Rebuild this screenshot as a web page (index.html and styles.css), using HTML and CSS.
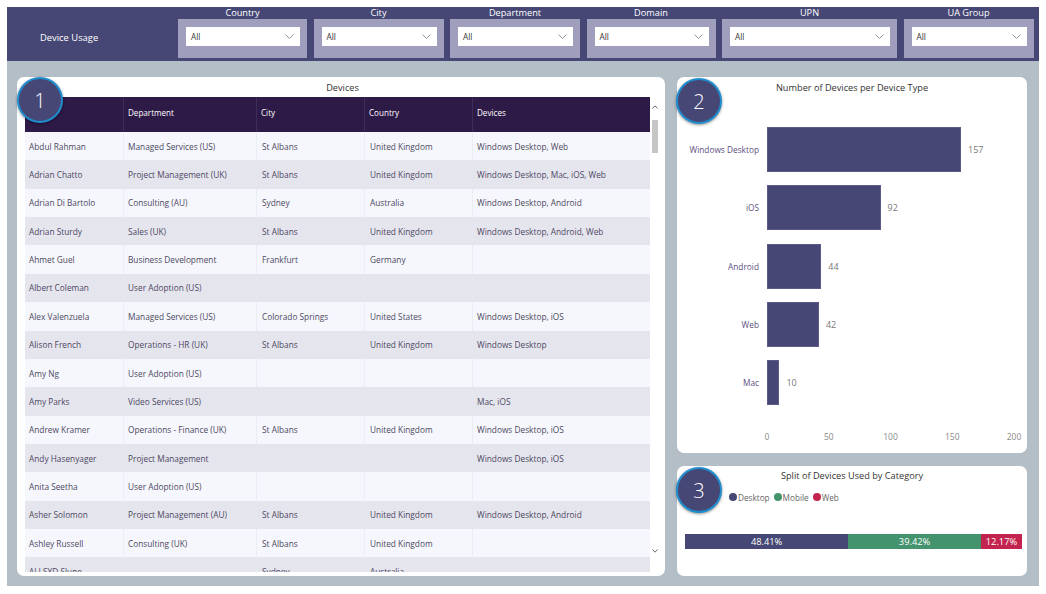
FILE: index.html
```html
<!DOCTYPE html>
<html lang="en">
<head>
<meta charset="utf-8">
<title>Device Usage</title>
<link rel="stylesheet" href="styles.css">
</head>
<body>
<div class="frame">
  <header class="topbar">
    <div class="brand">Device Usage</div>
    <div class="slicers">
      <div class="slicer w129"><div class="slicer-label">Country</div><div class="slicer-box"><div class="dropdown"><span>All</span><svg class="chev" viewBox="0 0 9 5"><polyline points="0.5,0.5 4.5,4.5 8.5,0.5"/></svg></div></div></div>
      <div class="slicer w130"><div class="slicer-label">City</div><div class="slicer-box"><div class="dropdown"><span>All</span><svg class="chev" viewBox="0 0 9 5"><polyline points="0.5,0.5 4.5,4.5 8.5,0.5"/></svg></div></div></div>
      <div class="slicer w130"><div class="slicer-label">Department</div><div class="slicer-box"><div class="dropdown"><span>All</span><svg class="chev" viewBox="0 0 9 5"><polyline points="0.5,0.5 4.5,4.5 8.5,0.5"/></svg></div></div></div>
      <div class="slicer w129"><div class="slicer-label">Domain</div><div class="slicer-box"><div class="dropdown"><span>All</span><svg class="chev" viewBox="0 0 9 5"><polyline points="0.5,0.5 4.5,4.5 8.5,0.5"/></svg></div></div></div>
      <div class="slicer w175"><div class="slicer-label">UPN</div><div class="slicer-box"><div class="dropdown"><span>All</span><svg class="chev" viewBox="0 0 9 5"><polyline points="0.5,0.5 4.5,4.5 8.5,0.5"/></svg></div></div></div>
      <div class="slicer w130"><div class="slicer-label">UA Group</div><div class="slicer-box"><div class="dropdown"><span>All</span><svg class="chev" viewBox="0 0 9 5"><polyline points="0.5,0.5 4.5,4.5 8.5,0.5"/></svg></div></div></div>
    </div>
  </header>

  <main class="content">
    <section class="card table-card">
      <div class="badge">1</div>
      <div class="card-title">Devices</div>
      <div class="table-wrap">
        <div class="table">
          <div class="thead">
            <div class="th"></div>
            <div class="th">Department</div>
            <div class="th">City</div>
            <div class="th">Country</div>
            <div class="th">Devices</div>
          </div>
          <div class="tbody">
            <div class="tr"><div>Abdul Rahman</div><div>Managed Services (US)</div><div>St Albans</div><div>United Kingdom</div><div>Windows Desktop, Web</div></div>
            <div class="tr"><div>Adrian Chatto</div><div>Project Management (UK)</div><div>St Albans</div><div>United Kingdom</div><div>Windows Desktop, Mac, iOS, Web</div></div>
            <div class="tr"><div>Adrian Di Bartolo</div><div>Consulting (AU)</div><div>Sydney</div><div>Australia</div><div>Windows Desktop, Android</div></div>
            <div class="tr"><div>Adrian Sturdy</div><div>Sales (UK)</div><div>St Albans</div><div>United Kingdom</div><div>Windows Desktop, Android, Web</div></div>
            <div class="tr"><div>Ahmet Guel</div><div>Business Development</div><div>Frankfurt</div><div>Germany</div><div></div></div>
            <div class="tr"><div>Albert Coleman</div><div>User Adoption (US)</div><div></div><div></div><div></div></div>
            <div class="tr"><div>Alex Valenzuela</div><div>Managed Services (US)</div><div>Colorado Springs</div><div>United States</div><div>Windows Desktop, iOS</div></div>
            <div class="tr"><div>Alison French</div><div>Operations - HR (UK)</div><div>St Albans</div><div>United Kingdom</div><div>Windows Desktop</div></div>
            <div class="tr"><div>Amy Ng</div><div>User Adoption (US)</div><div></div><div></div><div></div></div>
            <div class="tr"><div>Amy Parks</div><div>Video Services (US)</div><div></div><div></div><div>Mac, iOS</div></div>
            <div class="tr"><div>Andrew Kramer</div><div>Operations - Finance (UK)</div><div>St Albans</div><div>United Kingdom</div><div>Windows Desktop, iOS</div></div>
            <div class="tr"><div>Andy Hasenyager</div><div>Project Management</div><div></div><div></div><div>Windows Desktop, iOS</div></div>
            <div class="tr"><div>Anita Seetha</div><div>User Adoption (US)</div><div></div><div></div><div></div></div>
            <div class="tr"><div>Asher Solomon</div><div>Project Management (AU)</div><div>St Albans</div><div>United Kingdom</div><div>Windows Desktop, Android</div></div>
            <div class="tr"><div>Ashley Russell</div><div>Consulting (UK)</div><div>St Albans</div><div>United Kingdom</div><div></div></div>
            <div class="tr"><div>ALI SYD Slune</div><div></div><div>Sydney</div><div>Australia</div><div></div></div>
          </div>
        </div>
        <div class="scroll">
          <div class="sc-arrow"><svg viewBox="0 0 6 4"><polyline points="0.5,3.5 3,0.8 5.5,3.5"/></svg></div>
          <div class="sc-track"><div class="sc-thumb"></div></div>
          <div class="sc-arrow sc-down"><svg viewBox="0 0 6 4"><polyline points="0.5,0.5 3,3.2 5.5,0.5"/></svg></div>
        </div>
      </div>
    </section>

    <div class="right-col">
      <section class="card chart-card">
        <div class="badge badge-r">2</div>
        <div class="card-title">Number of Devices per Device Type</div>
        <div class="bars">
          <div class="bar-row"><div class="cat">Windows Desktop</div><div class="bar" style="width:194px"></div><div class="val">157</div></div>
          <div class="bar-row"><div class="cat">iOS</div><div class="bar" style="width:113.6px"></div><div class="val">92</div></div>
          <div class="bar-row"><div class="cat">Android</div><div class="bar" style="width:54.3px"></div><div class="val">44</div></div>
          <div class="bar-row"><div class="cat">Web</div><div class="bar" style="width:51.9px"></div><div class="val">42</div></div>
          <div class="bar-row"><div class="cat">Mac</div><div class="bar" style="width:12.4px"></div><div class="val">10</div></div>
        </div>
        <div class="axis"><span>0</span><span>50</span><span>100</span><span>150</span><span>200</span></div>
      </section>

      <section class="card split-card">
        <div class="badge badge-r">3</div>
        <div class="card-title split-title">Split of Devices Used by Category</div>
        <div class="legend">
          <span class="lg"><i class="dot c-desk"></i>Desktop</span>
          <span class="lg"><i class="dot c-mob"></i>Mobile</span>
          <span class="lg"><i class="dot c-web"></i>Web</span>
        </div>
        <div class="stack">
          <div class="seg c-desk" style="width:48.41%">48.41%</div>
          <div class="seg c-mob" style="width:39.42%">39.42%</div>
          <div class="seg c-web" style="width:12.17%">12.17%</div>
        </div>
      </section>
    </div>
  </main>
</div>
</body>
</html>
```

FILE: styles.css
```css
* { box-sizing: border-box; }

body {
  margin: 0;
  background: #ffffff;
  font-family: "Open Sans", "Noto Sans", "Liberation Sans", sans-serif;
}

.frame {
  margin: 7px;
  width: 1032px;
  height: 579px;
  background: #b3bec7;
  display: flex;
  flex-direction: column;
  overflow: hidden;
}

/* ---------- top bar ---------- */
.topbar {
  height: 54px;
  flex-shrink: 0;
  background: #464775;
  display: flex;
}

.brand {
  width: 171px;
  padding: 24px 0 0 33px;
  color: #ffffff;
  font-size: 9.4px;
  line-height: 14px;
}

.slicers {
  display: flex;
  gap: 6.5px;
}

.slicer { display: flex; flex-direction: column; }
.w129 { width: 129px; }
.w130 { width: 130px; }
.w175 { width: 175px; }

.slicer-label {
  height: 12px;
  color: #ffffff;
  font-size: 9.2px;
  line-height: 12px;
  text-align: center;
}

.slicer-box {
  height: 39px;
  background: #9f9ebd;
  padding: 8px 7px 0 8px;
}

.dropdown {
  height: 19px;
  background: #ffffff;
  display: flex;
  align-items: center;
  justify-content: space-between;
  padding: 0 6px 0 5px;
  font-size: 8.3px;
  color: #333333;
}

.chev {
  width: 9px;
  height: 5px;
  fill: none;
  stroke: #8a8a8a;
  stroke-width: 0.9;
}

/* ---------- content ---------- */
.content {
  flex: 1;
  display: flex;
  gap: 12px;
  padding: 16px 12px 10px 10px;
  min-height: 0;
}

.card {
  background: #ffffff;
  border-radius: 7px;
  position: relative;
}

.card-title {
  height: 20px;
  line-height: 22px;
  text-align: center;
  font-size: 9.2px;
  color: #333333;
}

.badge {
  position: absolute;
  top: 0;
  left: 0;
  width: 46px;
  height: 46px;
  border-radius: 50%;
  background: #464775;
  border: 2px solid #1f8dcd;
  box-shadow: 0 1px 3px rgba(0, 0, 0, 0.45);
  color: #ffffff;
  font-size: 20px;
  font-weight: 300;
  display: flex;
  align-items: center;
  justify-content: center;
  z-index: 2;
}
.badge-r { top: 1px; left: -1px; }

/* ---------- table ---------- */
.table-card {
  width: 648px;
  display: flex;
  flex-direction: column;
  padding: 0 5px 4px 8px;
}

.table-wrap {
  flex: 1;
  display: flex;
  min-height: 0;
}

.table {
  width: 625px;
  display: flex;
  flex-direction: column;
  overflow: hidden;
}

.thead, .tr {
  display: grid;
  grid-template-columns: 98px 133px 108px 108px 178px;
}

.thead {
  height: 35px;
  flex-shrink: 0;
  background: #2e1a47;
  color: #ffffff;
  font-size: 8.1px;
}

.th {
  display: flex;
  align-items: center;
  padding: 0 0 4px 4px;
  border-left: 1px solid #3e2d58;
}
.th:first-child { border-left: none; }

.tbody {
  flex: 1;
  overflow: hidden;
}

.tr {
  height: 28.36px;
  align-items: center;
  font-size: 8.3px;
  color: #4e4862;
  white-space: nowrap;
}
.tr:nth-child(odd) { background: #f5f7fc; }
.tr:nth-child(even) { background: #e5e5ee; }
.tr > div {
  padding-left: 4px;
  height: 100%;
  display: flex;
  align-items: center;
  border-left: 1px solid rgba(228, 230, 240, 0.6);
  overflow: hidden;
}
.tr > div:first-child { border-left: none; }
.tr > div:nth-child(3), .tr > div:nth-child(4) { padding-left: 5px; }

.scroll {
  width: 10px;
  display: flex;
  flex-direction: column;
  align-items: center;
}

.sc-arrow {
  height: 20px;
  display: flex;
  align-items: center;
  justify-content: center;
}
.sc-arrow svg {
  width: 6px;
  height: 4px;
  fill: none;
  stroke: #666666;
  stroke-width: 1;
}
.sc-down { margin-bottom: 11px; }

.sc-track {
  flex: 1;
  width: 10px;
  padding: 3px 2px 0 2px;
}
.sc-thumb {
  width: 6px;
  height: 33px;
  background: #c6c6c6;
}

/* ---------- bar chart ---------- */
.right-col {
  width: 350px;
  display: flex;
  flex-direction: column;
  gap: 13px;
}

.chart-card {
  height: 376px;
  flex-shrink: 0;
}

.bars {
  margin-top: 30px;
  display: flex;
  flex-direction: column;
  gap: 13.25px;
}

.bar-row {
  height: 45px;
  display: flex;
  align-items: center;
}

.cat {
  width: 82px;
  margin-right: 8px;
  text-align: right;
  font-size: 8.3px;
  color: #5d4f80;
}

.bar {
  height: 45px;
  background: #464775;
  box-shadow: inset 0 0 0 1px #5a5b88;
}

.val {
  margin-left: 7px;
  font-size: 9px;
  color: #777777;
}

.axis {
  margin: 25px 0 0 75px;
  width: 277px;
  display: flex;
  justify-content: space-between;
  font-size: 8.5px;
  line-height: 14px;
  color: #8a8a8a;
}
.axis span { width: 30px; text-align: center; }

/* ---------- split card ---------- */
.split-card { flex: 1; }

.split-title { line-height: 20px; }

.legend {
  margin-top: 4px;
  height: 14px;
  padding-left: 52px;
  display: flex;
  align-items: center;
  gap: 4px;
  font-size: 8.2px;
  color: #666666;
}
.lg { display: flex; align-items: center; gap: 1px; }
.dot {
  width: 8px;
  height: 8px;
  border-radius: 50%;
  display: inline-block;
}

.stack {
  margin: 30px 5px 0 8px;
  height: 15px;
  display: flex;
}
.seg {
  height: 15px;
  color: #ffffff;
  font-size: 9.3px;
  line-height: 15px;
  text-align: center;
}

.c-desk { background: #464775; }
.c-mob { background: #44936f; }
.c-web { background: #c3234f; }
```
